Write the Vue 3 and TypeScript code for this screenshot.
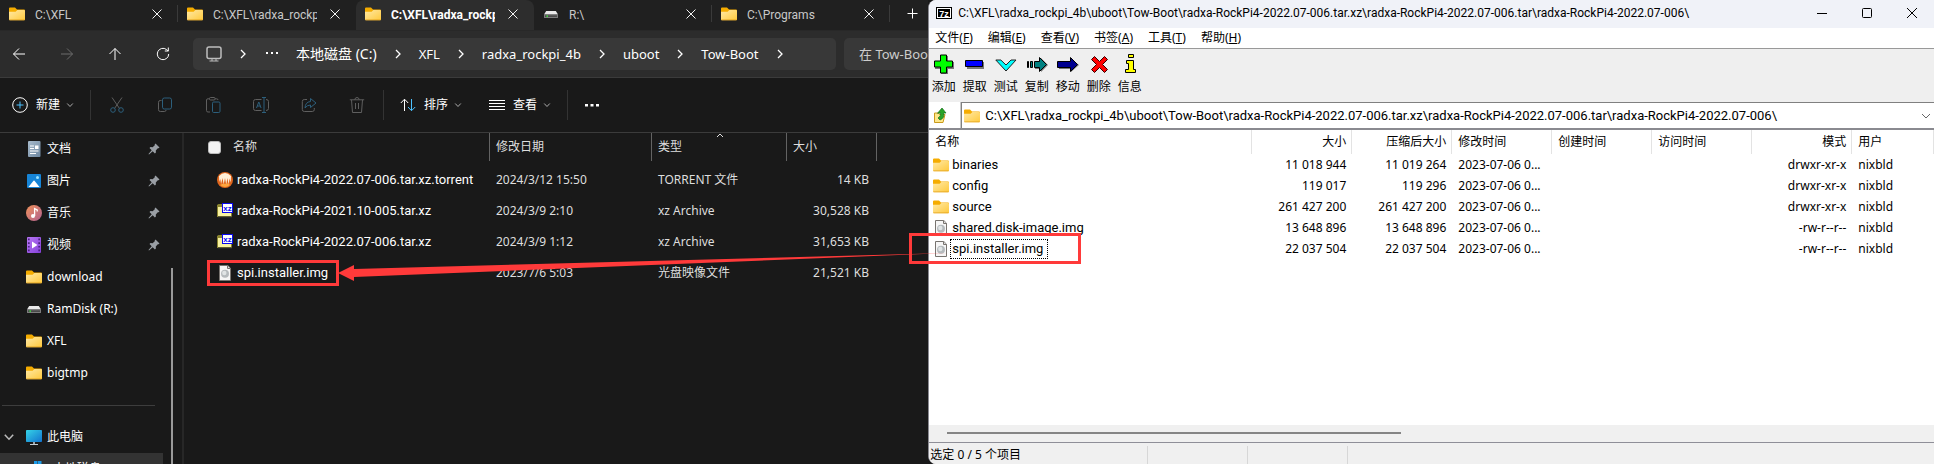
<script setup lang="ts">
interface Tab { label: string; icon: string; active?: boolean; divider?: boolean }
interface Place { label: string; icon: string; pinned?: boolean }
interface FileRow { name: string; icon: string; date: string; type: string; size: string }
interface ArchiveRow { name: string; icon: string; size: string; packed: string; mode: string; focused?: boolean }

const tabs: Tab[] = [
  { label: 'C:\\XFL', icon: 'folder', divider: true },
  { label: 'C:\\XFL\\radxa_rockp', icon: 'folder' },
  { label: 'C:\\XFL\\radxa_rockp', icon: 'folder', active: true },
  { label: 'R:\\', icon: 'drive', divider: true },
  { label: 'C:\\Programs', icon: 'folder', divider: true },
]
const navButtons = [
  { icon: 'back', label: '后退' },
  { icon: 'forward', label: '前进', disabled: true },
  { icon: 'up', label: '向上' },
  { icon: 'refresh', label: '刷新' },
]
const crumbs: string[] = ['本地磁盘 (C:)', 'XFL', 'radxa_rockpi_4b', 'uboot', 'Tow-Boot']
const editButtons = [
  { icon: 'cut', label: '剪切' },
  { icon: 'copy', label: '复制' },
  { icon: 'paste', label: '粘贴' },
  { icon: 'rename', label: '重命名' },
  { icon: 'share', label: '共享' },
  { icon: 'trash', label: '删除' },
]
const places: Place[] = [
  { label: '文档', icon: 'docs', pinned: true },
  { label: '图片', icon: 'pics', pinned: true },
  { label: '音乐', icon: 'music', pinned: true },
  { label: '视频', icon: 'video', pinned: true },
  { label: 'download', icon: 'folder' },
  { label: 'RamDisk (R:)', icon: 'drive' },
  { label: 'XFL', icon: 'folder' },
  { label: 'bigtmp', icon: 'folder' },
]
const files: FileRow[] = [
  { name: 'radxa-RockPi4-2022.07-006.tar.xz.torrent', icon: 'torrent', date: '2024/3/12 15:50', type: 'TORRENT 文件', size: '14 KB' },
  { name: 'radxa-RockPi4-2021.10-005.tar.xz', icon: 'xz', date: '2024/3/9 2:10', type: 'xz Archive', size: '30,528 KB' },
  { name: 'radxa-RockPi4-2022.07-006.tar.xz', icon: 'xz', date: '2024/3/9 1:12', type: 'xz Archive', size: '31,653 KB' },
  { name: 'spi.installer.img', icon: 'image-file', date: '2023/7/6 5:03', type: '光盘映像文件', size: '21,521 KB' },
]
const archivePath = 'C:\\XFL\\radxa_rockpi_4b\\uboot\\Tow-Boot\\radxa-RockPi4-2022.07-006.tar.xz\\radxa-RockPi4-2022.07-006.tar\\radxa-RockPi4-2022.07-006\\'
const menus: [string, string][] = [['文件', 'F'], ['编辑', 'E'], ['查看', 'V'], ['书签', 'A'], ['工具', 'T'], ['帮助', 'H']]
const tools = [
  { icon: 'z-add', label: '添加' },
  { icon: 'z-extract', label: '提取' },
  { icon: 'z-test', label: '测试' },
  { icon: 'z-copy', label: '复制' },
  { icon: 'z-move', label: '移动' },
  { icon: 'z-delete', label: '删除' },
  { icon: 'z-info', label: '信息' },
]
const entries: ArchiveRow[] = [
  { name: 'binaries', icon: 'folder', size: '11 018 944', packed: '11 019 264', mode: 'drwxr-xr-x' },
  { name: 'config', icon: 'folder', size: '119 017', packed: '119 296', mode: 'drwxr-xr-x' },
  { name: 'source', icon: 'folder', size: '261 427 200', packed: '261 427 200', mode: 'drwxr-xr-x' },
  { name: 'shared.disk-image.img', icon: 'image-file', size: '13 648 896', packed: '13 648 896', mode: '-rw-r--r--' },
  { name: 'spi.installer.img', icon: 'image-file', size: '22 037 504', packed: '22 037 504', mode: '-rw-r--r--', focused: true },
]
</script>

<template>
  <svg class="defs" aria-hidden="true">
    <defs>
      <linearGradient id="g-folder" x1="0" y1="0" x2="1" y2="1"><stop offset="0" stop-color="#ffe9a6" /><stop offset="1" stop-color="#ffc93c" /></linearGradient>
      <linearGradient id="g-docs" x1="0" y1="0" x2="1" y2="1"><stop offset="0" stop-color="#a9bccd" /><stop offset="1" stop-color="#6d87a0" /></linearGradient>
      <linearGradient id="g-music" x1="0" y1="0" x2="1" y2="1"><stop offset="0" stop-color="#f0925a" /><stop offset="1" stop-color="#b0608f" /></linearGradient>
      <linearGradient id="g-video" x1="0" y1="0" x2="1" y2="1"><stop offset="0" stop-color="#b877f5" /><stop offset="1" stop-color="#8440d8" /></linearGradient>
      <linearGradient id="g-pc" x1="0" y1="0" x2="1" y2="1"><stop offset="0" stop-color="#35d3e6" /><stop offset="1" stop-color="#1273cf" /></linearGradient>
    </defs>
    <symbol id="folder" viewBox="0 0 16 16"><path d="M0 2.6q0-1 1-1h5l2 2h7q1 0 1 1V7H0z" fill="#f5ac00" /><path d="M0 5.8h6.6L8.4 4H15q1 0 1 1v8.4q0 .8-.8.8H.8q-.8 0-.8-.8z" fill="url(#g-folder)" /><path d="M.2 13.4h15.6q-.2.9-1 .9H1.2q-.8 0-1-.9z" fill="#e2a11f" /></symbol>
    <symbol id="drive" viewBox="0 0 16 16"><path d="M3.2 5h9.600L15 8.500H1z" fill="#e9e9e9" /><rect x="1" y="8.500" width="14" height="3.500" rx=".6" fill="#7d7d7d" /><rect x="2" y="9.300" width="12" height="1.700" fill="#4a4a4a" /><rect x="3.500" y="9.400" width="1.500" height="1.500" fill="#3de03d" /></symbol>
    <symbol id="docs" viewBox="0 0 16 16"><rect x="2" width="12.500" height="16" rx="1" fill="url(#g-docs)" /><path d="M4 5h4M4 7.500h4M4 10h8.500M4 12.500h6" stroke="#fff" /><rect x="9" y="4.500" width="3.500" height="3.500" fill="#fff" /></symbol>
    <symbol id="pics" viewBox="0 0 16 16"><rect x="1" y="1" width="14" height="14" rx="1" fill="#1684d6" /><path d="M2.500 14l5-6.300q.5-.5 1 0l5 6.300z" fill="#fff" /><circle cx="11.500" cy="4.500" r="1.500" fill="#9be3ff" /></symbol>
    <symbol id="music" viewBox="0 0 16 16"><circle cx="8" cy="8" r="8" fill="url(#g-music)" /><path d="M8.600 11V3.600l2.600 1.200v1.800" fill="none" stroke="#fff" stroke-width="1.300" /><circle cx="7" cy="11" r="2" fill="#fff" /></symbol>
    <symbol id="video" viewBox="0 0 16 16"><rect x="1" width="14" height="16" rx="1" fill="url(#g-video)" /><path d="M6 4.500l5.500 3.500L6 11.500z" fill="#fff" /><path d="M2.800 1.500v13M13.200 1.500v13" stroke="#4c2380" stroke-width="1.700" stroke-dasharray="1.700 2" /></symbol>
    <symbol id="pc" viewBox="0 0 16 16"><rect y="1" width="16" height="12" rx=".8" fill="url(#g-pc)" /><path d="M7 13h2v2H7z" fill="#9aa5ad" /><path d="M4 15h8v1H4z" fill="#c3ccd2" /></symbol>
    <symbol id="system-drive" viewBox="0 0 16 16"><path d="M2 0h3.500v3.500H2zM6 0h3.500v3.500H6z" fill="#1c9be8" /><path d="M1 8h14v4H1z" fill="#999" /></symbol>
    <symbol id="pin" viewBox="0 0 12 12"><path d="M7.500.5l4 4-1 .8-.7-.1-2 2.200.1 2.100-1 1L4.700 8.300 1 11.500l-.5-.5 3.200-3.700-2.200-2.200 1-1 2.100.1 2.200-2-.1-.7z" fill="#9a9fa5" /></symbol>
    <symbol id="torrent" viewBox="0 0 16 16"><circle cx="8" cy="8" r="8" fill="#e0661d" /><path d="M2 4q6-6 12 0l-.3 6.500-1.200-4-.8 6-1.400-6.500-1 7L8 6l-1.300 6.500L5.500 6l-1.400 6-.8-5-1 3z" fill="#fff0d8" /><path d="M3 13q5 4 10 0l-2-1.500-6 .5z" fill="#ffa63d" /></symbol>
    <symbol id="xz" viewBox="0 0 16 16"><path d="M0 2l1.500-1H5v2h10v11H0z" fill="#8a8430" /><path d="M1 4h13v9H1z" fill="#f8f2a0" /><path d="M1 14h14" stroke="#333" /><rect x="5.500" y=".5" width="10" height="9" fill="#fff" stroke="#0808f0" /><text x="10.500" y="8" text-anchor="middle" class="xz-text">xz</text></symbol>
    <symbol id="image-file" viewBox="0 0 16 16"><path d="M2.500.5h8.300L13.500 3.200v12.300h-11z" fill="#f6f6f6" stroke="#77736f" /><path d="M10.500.8v2.700h2.700" fill="#ddd" stroke="#77736f" /><circle cx="8" cy="8.800" r="4" fill="#b5babd" /><circle cx="7.300" cy="8" r="2.200" fill="#e0e4e5" /></symbol>
    <symbol id="close" viewBox="0 0 16 16"><path d="M3.500 3.500l9 9M12.500 3.500l-9 9" /></symbol>
    <symbol id="plus" viewBox="0 0 16 16"><path d="M7.500 2.500v10M2.500 7.500h10" /></symbol>
    <symbol id="back" viewBox="0 0 16 16"><path d="M14 8H2.500M8 2.500L2.500 8 8 13.500" /></symbol>
    <symbol id="forward" viewBox="0 0 16 16"><path d="M2 8h11.500M8 2.500L13.500 8 8 13.500" /></symbol>
    <symbol id="up" viewBox="0 0 16 16"><path d="M8 14V2.500M2.500 8L8 2.500 13.500 8" /></symbol>
    <symbol id="refresh" viewBox="0 0 16 16"><path d="M13.700 8A5.700 5.700 0 1 1 11.500 3.500L13.200 5M13.300 1.500V5H9.800" /></symbol>
    <symbol id="monitor" viewBox="0 0 16 16"><rect x="1" y="1" width="14" height="11.500" rx="2" stroke-width="1.500" /><path d="M6 12.500V15M10 12.500V15M3.500 15h9" /></symbol>
    <symbol id="chev-right" viewBox="0 0 8 12"><path d="M2 2l4 4-4 4" stroke-width="1.300" /></symbol>
    <symbol id="chev-down" viewBox="0 0 8 8"><path d="M1.200 2.500L4 5.500l2.800-3" /></symbol>
    <symbol id="dots" viewBox="0 0 16 16"><path d="M1 7h3v2.500H1zM6.500 7h3v2.500h-3zM12 7h3v2.500h-3z" fill="currentColor" stroke="none" /></symbol>
    <symbol id="small-dots" viewBox="0 0 12 12"><path d="M0 4h2v2H0zM5 4h2v2H5zM10 4h2v2h-2z" fill="currentColor" stroke="none" /></symbol>
    <symbol id="new" viewBox="0 0 16 16"><circle cx="8" cy="8" r="7.300" /><path d="M8 4.500v7M4.500 8h7" stroke="#4cc2ff" /></symbol>
    <symbol id="cut" viewBox="0 0 16 16"><path d="M3 .5l7.500 11M13 .5l-7.500 11" /><g stroke="#2c5f7c"><circle cx="4" cy="13" r="2.300" /><circle cx="12" cy="13" r="2.300" /></g></symbol>
    <symbol id="copy" viewBox="0 0 16 16"><path d="M4.500 3.500H3.300Q1.500 3.500 1.500 5.300v7.400q0 1.800 1.800 1.800h4q1.800 0 1.800-1.500" /><rect x="5.500" y="1" width="9" height="11" rx="1.800" stroke="#2c5f7c" /></symbol>
    <symbol id="paste" viewBox="0 0 16 16"><path d="M5 15H3q-1.500 0-1.500-1.500V3Q1.500 1.800 3 1.800h1.500M10 1.800h1.500Q13 1.800 13 3" /><rect x="4.500" y=".5" width="5.500" height="2.500" rx="1" /><rect x="7.500" y="5" width="7.500" height="10.500" rx="1.200" stroke="#2c5f7c" /></symbol>
    <symbol id="rename" viewBox="0 0 18 16"><path d="M9.500 2.500h-6Q1.500 2.500 1.500 4.500v7q0 2 2 2h6M14 2.500q2.500 0 2.500 2v7q0 2-2.500 2" /><path d="M4.500 11l2.300-6 2.300 6M5.300 9h3M12 .8v14.400M10 .5h4M10 15.500h4" stroke="#2c5f7c" /></symbol>
    <symbol id="share" viewBox="0 0 16 16"><path d="M6 2.500H3.300q-2 0-2 2v8q0 2 2 2h8q2 0 2-2V11" /><path d="M9.500 1.500L15 6l-5.500 4.500V8Q6 8 4 11q.3-6 5.500-6.500z" stroke="#2c5f7c" /></symbol>
    <symbol id="trash" viewBox="0 0 16 16"><path d="M.8 2.800h14.400M2.500 2.800l1 12.700h9l1-12.700M5.800 2.800Q6 .5 8 .5t2.200 2.300M6.500 6v6M9.500 6v6" /></symbol>
    <symbol id="sort" viewBox="0 0 16 16"><path d="M4.500 14V2.500M.8 6l3.700-3.800L8.200 6" /><path d="M11.500 2v11.500M8 10l3.500 3.700L15.200 10" stroke="#4cc2ff" /></symbol>
    <symbol id="lines" viewBox="0 0 16 16"><path d="M0 3.500h16M0 6.500h16M0 9.500h16M0 12.500h16" /></symbol>
    <symbol id="zip-logo" viewBox="0 0 16 12"><rect width="16" height="12" fill="#000" /><rect x="1.500" y="1.500" width="13" height="9" fill="#000" stroke="#fff" /><text x="8" y="9.500" text-anchor="middle" class="zip-text">7z</text></symbol>
    <symbol id="z-add" viewBox="0 0 22 20"><path d="M8 2h7v6h6v7h-6v6H8v-6H2V8h6z" fill="#777" /><path d="M7.500 1h6v6h6v6h-6v6h-6v-6h-6V7h6z" fill="#0f0" stroke="#000" /></symbol>
    <symbol id="z-extract" viewBox="0 0 22 20"><path d="M3 8h17v7H3z" fill="#777" /><path d="M1.500 6.500h17v6h-17z" fill="#00f" stroke="#000" /></symbol>
    <symbol id="z-test" viewBox="0 0 22 20"><path d="M.8 6h5l5.200 5L16 6h5L11 17z" fill="#0ff" stroke="#222" /></symbol>
    <symbol id="z-copy" viewBox="0 0 22 20"><path d="M9 7h6V4l7 7-7 7v-3H9z" fill="#777" /><path d="M1.500 7.500h1v6h-1zM4.500 7.500h2v6h-2zM8.500 7.500h5v-4l7 7-7 7v-4h-5z" fill="#008080" stroke="#000" /></symbol>
    <symbol id="z-move" viewBox="0 0 22 20"><path d="M2 8h12V5l8 6-8 7v-3H2z" fill="#777" /><path d="M.5 7.500h13v-4l7 7-7 7v-4H.5z" fill="#000090" stroke="#000" /></symbol>
    <symbol id="z-delete" viewBox="0 0 22 20"><path d="M6.500 2.500l5 5 5-5 3 3-5 5 5 5-3 3-5-5-5 5-3-3 5-5-5-5z" fill="#f00" stroke="#300" /></symbol>
    <symbol id="z-info" viewBox="0 0 22 20"><path d="M9.500.5h5v3h-5zM7.500 6.500h7v9h2v3h-10v-3h3v-6h-2z" fill="#ff0" stroke="#000" /></symbol>
    <symbol id="folder-up" viewBox="0 0 16 16"><path d="M1.500 6h4l1 1.500h5.500L10 15.500H1.500z" fill="#ffe78a" stroke="#c99a1c" /><path d="M7 13q5-2 3.500-7H13L9 1 4.500 6.300l3-.3q.8 3-2.500 5z" fill="#28a428" stroke="#14701a" stroke-width=".7" /></symbol>
  </svg>

  <main class="desktop">
    <section class="explorer" aria-label="文件资源管理器">
      <div class="tabs">
        <div v-for="(tab, i) in tabs" :key="i" class="tab" :class="{ active: tab.active, divider: tab.divider }">
          <svg class="i16"><use :href="'#' + tab.icon" /></svg>
          <span class="tab-label">{{ tab.label }}</span>
          <button class="plain" aria-label="关闭选项卡"><svg class="i16 line"><use href="#close" /></svg></button>
        </div>
        <button class="plain new-tab" aria-label="新建选项卡"><svg class="i16 line"><use href="#plus" /></svg></button>
      </div>

      <nav class="nav">
        <button v-for="b in navButtons" :key="b.icon" class="plain nav-btn" :aria-label="b.label" :disabled="b.disabled">
          <svg class="i16 line"><use :href="'#' + b.icon" /></svg>
        </button>
        <div class="address">
          <svg class="i16 line pc-outline"><use href="#monitor" /></svg>
          <svg class="chev line"><use href="#chev-right" /></svg>
          <svg class="i12 line overflow-dots"><use href="#small-dots" /></svg>
          <template v-for="c in crumbs" :key="c">
            <a href="#" class="crumb">{{ c }}</a>
            <svg class="chev line"><use href="#chev-right" /></svg>
          </template>
        </div>
        <input class="search" type="search" aria-label="搜索" placeholder="在 Tow-Boot 中搜索" />
      </nav>

      <div class="commands">
        <button class="plain cmd"><svg class="i16 line"><use href="#new" /></svg>新建<svg class="i8 line"><use href="#chev-down" /></svg></button>
        <div class="edit-group">
          <button v-for="b in editButtons" :key="b.icon" class="plain" :aria-label="b.label" disabled>
            <svg class="i18 line"><use :href="'#' + b.icon" /></svg>
          </button>
        </div>
        <div class="view-group">
          <button class="plain cmd"><svg class="i16 line"><use href="#sort" /></svg>排序<svg class="i8 line"><use href="#chev-down" /></svg></button>
          <button class="plain cmd"><svg class="i16 line"><use href="#lines" /></svg>查看<svg class="i8 line"><use href="#chev-down" /></svg></button>
        </div>
        <button class="plain more" aria-label="更多"><svg class="i16 line"><use href="#dots" /></svg></button>
      </div>

      <div class="body">
        <aside class="side">
          <div class="places">
            <a v-for="p in places" :key="p.label" href="#" class="place">
              <svg class="i16"><use :href="'#' + p.icon" /></svg>
              <span>{{ p.label }}</span>
              <svg v-if="p.pinned" class="i12 pin"><use href="#pin" /></svg>
            </a>
            <hr />
            <a href="#" class="place root"><svg class="i12 line twist"><use href="#chev-down" /></svg><svg class="i16"><use href="#pc" /></svg><span>此电脑</span></a>
            <a href="#" class="place selected"><svg class="i16"><use href="#system-drive" /></svg><span>本地磁盘 (C:)</span></a>
          </div>
          <div class="track"><div class="thumb"></div></div>
        </aside>
        <div class="listing">
          <table class="files">
            <colgroup><col class="c-name" /><col class="c-date" /><col class="c-type" /><col class="c-size" /></colgroup>
            <thead>
              <tr>
                <th><label class="head-name"><input type="checkbox" class="check" aria-label="全选" />名称</label></th>
                <th>修改日期</th>
                <th class="sorted">类型<svg class="caret line" viewBox="0 0 8 5"><path d="M1 4l3-3 3 3" /></svg></th>
                <th>大小</th>
              </tr>
            </thead>
            <tbody>
              <tr v-for="f in files" :key="f.name">
                <td><span class="file"><svg class="i16"><use :href="'#' + f.icon" /></svg>{{ f.name }}</span></td>
                <td>{{ f.date }}</td>
                <td>{{ f.type }}</td>
                <td class="num">{{ f.size }}</td>
              </tr>
            </tbody>
          </table>
        </div>
      </div>
    </section>

    <section class="zip" aria-label="7-Zip">
      <header class="title">
        <svg class="logo"><use href="#zip-logo" /></svg>
        <h1>{{ archivePath }}</h1>
        <button class="plain win" aria-label="最小化"><svg class="i12 line" viewBox="0 0 12 12"><path d="M1 6.500h10" /></svg></button>
        <button class="plain win" aria-label="最大化"><svg class="i12 line" viewBox="0 0 12 12"><rect x="1.500" y="1.500" width="9" height="9" rx="1" /></svg></button>
        <button class="plain win" aria-label="关闭"><svg class="i12 line" viewBox="0 0 12 12"><path d="M1 1l10 10M11 1L1 11" /></svg></button>
      </header>
      <div class="menu">
        <button v-for="m in menus" :key="m[1]" class="plain">{{ m[0] }}(<u>{{ m[1] }}</u>)</button>
      </div>
      <div class="tools">
        <button v-for="t in tools" :key="t.icon" class="plain tool"><svg><use :href="'#' + t.icon" /></svg>{{ t.label }}</button>
      </div>
      <div class="path">
        <button class="plain up" aria-label="向上一级"><svg class="i16"><use href="#folder-up" /></svg></button>
        <div class="combo">
          <svg class="i16"><use href="#folder" /></svg>
          <input type="text" aria-label="路径" :value="archivePath" />
          <button class="plain drop" aria-label="展开"><svg class="i12 line" viewBox="0 0 12 12"><path d="M2 4l4 4 4-4" /></svg></button>
        </div>
      </div>
      <div class="entries">
        <table>
          <colgroup><col class="z-name" /><col v-for="n in 6" :key="n" class="z-col" /><col class="z-last" /></colgroup>
          <thead>
            <tr>
              <th>名称</th><th class="num">大小</th><th class="num">压缩后大小</th><th>修改时间</th><th>创建时间</th><th>访问时间</th><th class="num">模式</th><th>用户</th>
            </tr>
          </thead>
          <tbody>
            <tr v-for="e in entries" :key="e.name">
              <td><span class="entry"><svg class="i16"><use :href="'#' + e.icon" /></svg><span class="entry-name" :class="{ focused: e.focused }">{{ e.name }}</span></span></td>
              <td class="num">{{ e.size }}</td>
              <td class="num">{{ e.packed }}</td>
              <td>2023-07-06 0...</td>
              <td></td>
              <td></td>
              <td class="num">{{ e.mode }}</td>
              <td>nixbld</td>
            </tr>
          </tbody>
        </table>
      </div>
      <div class="hscroll"><div class="hthumb"></div></div>
      <footer class="status"><span class="count">选定 0 / 5 个项目</span><span></span><span></span><span></span></footer>
    </section>

    <svg class="marks" aria-hidden="true">
      <rect x="208.500" y="261.500" width="129" height="23" />
      <rect x="910.500" y="234.500" width="169" height="28" />
      <path d="M338 273l16-8v4L948 253 354 277v4z" />
    </svg>
  </main>
</template>

<style>
body { margin: 0; background: #191919; }
</style>

<style scoped>
.defs { position: absolute; width: 0; height: 0; }
.xz-text { font: bold 8px "Liberation Sans", sans-serif; fill: #0808f0; }
.zip-text { font: bold 9px "Liberation Sans", sans-serif; fill: #fff; }
.desktop {
  position: relative;
  display: grid;
  grid-template-columns: 12fr 13fr;
  height: 100vh;
  overflow: hidden;
  font: 12px/16px "Noto Sans", "Noto Sans CJK SC", sans-serif;
}
.desktop * { box-sizing: border-box; }
svg { display: block; flex: none; }
.i8 { width: 8px; height: 8px; }
.i12 { width: 12px; height: 12px; }
.i16 { width: 16px; height: 16px; }
.i18 { width: 18px; height: 16px; }
.line { fill: none; stroke: currentColor; }
.plain { margin: 0; padding: 0; border: 0; background: none; color: inherit; font: inherit; white-space: nowrap; }
a { color: inherit; text-decoration: none; }

.explorer { display: flex; flex-direction: column; min-width: 0; overflow: hidden; background: #191919; color: #fff; }
.tabs { display: flex; flex: none; height: 31px; background: #202020; border-bottom: 1px solid #282828; font-family: Roboto, "Noto Sans CJK SC", sans-serif; }
.tab { display: flex; flex: none; align-items: center; width: 178px; padding: 0 0 3px 9px; color: #c8c8c8; }
.tab-label { flex: none; width: 104px; margin: 2px 10px 0 10px; overflow: hidden; white-space: nowrap; }
.tab .plain { color: #f2f2f2; }
.tab.divider { border-right: 1px solid #3a3a3a; border-image: linear-gradient(#202020 6px, #3a3a3a 6px, #3a3a3a 22px, #202020 22px) 1; }
.tab.active { background: #2d2d2d; color: #fff; font-weight: bold; border-radius: 8px 8px 0 0; }
.new-tab { padding: 0 0 2px 15px; }

.nav { display: flex; flex: none; align-items: center; height: 47px; padding: 0 0 0 11px; background: #2c2c2c; border-bottom: 1px solid #3b3b3b; font-size: 13px; }
.nav-btn { flex: none; width: 16px; margin-right: 32px; }
.nav-btn:last-of-type { margin-right: 22px; }
.nav-btn:disabled { color: #6c6c6c; }
.address { display: flex; flex: none; align-items: center; width: 643px; height: 32px; padding: 0 13px; background: #383838; border-radius: 5px; gap: 17px; }
.pc-outline { color: #bdbdbd; }
.overflow-dots { margin: 0 1px 0 2px; }
.chev { width: 8px; height: 12px; }
.crumb { white-space: nowrap; }
.crumb:first-of-type { font-size: 14px; }
.search { flex: none; width: 200px; height: 32px; margin-left: 8px; padding: 0 15px; border: 0; border-radius: 5px; background: #383838; font: inherit; }
.search::placeholder { color: #cdcdcd; opacity: 1; }

.commands { display: flex; flex: none; align-items: center; height: 55px; border-bottom: 1px solid #3b3b3b; }
.cmd { display: flex; align-items: center; }
.cmd .i16 { margin-right: 8px; }
.cmd .i8 { margin-left: 6px; color: #aaa; }
.commands > .cmd { padding: 0 16px 0 12px; }
.edit-group { display: flex; gap: 30px; padding: 7px 17px; border: solid #333; border-width: 0 1px; color: #5f5f5f; }
.view-group { display: flex; gap: 27px; padding: 7px 16px; border-right: 1px solid #333; }
.more { padding: 0 16px; }

.body { display: flex; flex: 1; min-height: 0; }
.side { display: flex; flex: none; width: 184px; border-right: 2px solid #272727; overflow: hidden; }
.places { flex: none; width: 163px; }
.place { display: flex; align-items: center; gap: 5px; height: 32px; padding: 0 3px 0 26px; white-space: nowrap; }
.pin { margin-left: auto; }
hr { height: 1px; margin: 16px 8px 15px 2px; border: 0; background: #3d3d3d; }
.root { padding-left: 3px; }
.twist { margin-right: 6px; color: #bbb; }
.selected { padding-left: 32px; background: #333; }
.track { display: flex; align-items: flex-end; padding-left: 8px; }
.thumb { width: 2px; height: calc(100% - 135px); background: #9a9a9a; }

.listing { flex: 1; min-width: 0; overflow: hidden; color: #dedede; }
table { border-collapse: separate; border-spacing: 0; table-layout: fixed; }
th { font-weight: normal; text-align: left; white-space: nowrap; }
td { white-space: nowrap; padding: 0; }
.files { width: 693px; }
.c-name { width: 306px; }
.c-date { width: 162px; }
.c-type { width: 135px; }
.c-size { width: 90px; }
.files th { position: relative; height: 28px; padding: 0 6px; border-right: 1px solid #636363; }
.files tbody::before { content: ""; display: block; height: 3px; }
.files td { height: 31px; padding: 0 8px 0 6px; }
.files td:first-child { padding-left: 33px; color: #fff; }
.num, .entries .num { text-align: right; }
.head-name { display: flex; align-items: center; padding-left: 18px; gap: 12px; }
.check { appearance: none; width: 13px; height: 13px; margin: 0; border: 1px solid #bbb; border-radius: 3px; background: #f3f3f3; }
.caret { position: absolute; top: 0; left: 64px; width: 8px; height: 5px; }
.file { display: flex; align-items: center; gap: 4px; }
.file, .entry-name { font-family: Roboto, "Noto Sans", sans-serif; font-size: 13px; }

.zip { display: flex; flex-direction: column; min-width: 0; overflow: hidden; background: #fff; color: #000; border-left: 1px solid #8a8a92; border-radius: 8px 0 0 8px; }
.title { display: flex; flex: none; align-items: center; height: 28px; padding: 0 0 3px 7px; background: #f0f2f8; }
.logo { width: 16px; height: 12px; }
.title h1 { flex: 1; min-width: 0; margin: 0 0 0 6px; overflow: hidden; font: 12px/16px Roboto, "Noto Sans", sans-serif; white-space: nowrap; }
.win { flex: none; display: flex; justify-content: center; width: 45px; }
.menu { display: flex; flex: none; align-items: center; height: 20px; gap: 15px; padding: 0 6px; }
.tools { display: flex; flex: none; height: 54px; background: #efefef; border-top: 1px solid #999; padding: 5px 0 0; }
.tool { display: flex; flex-direction: column; align-items: center; width: 31px; gap: 5px; margin-left: -1px; margin-right: 1px; }
.tool svg { width: 22px; height: 20px; overflow: visible; }
.path { display: flex; flex: none; height: 28px; border-bottom: 2px solid #8a8a90; }
.up { width: 32px; padding-left: 4px; border-right: 1px solid #c8c8c8; }
.combo { display: flex; flex: 1; align-items: center; border: 1px solid #808080; border-width: 1px 0 0 1px; padding: 0 2px 0 2px; gap: 5px; }
.combo input { flex: 1; min-width: 0; padding: 0; border: 0; outline: 0; background: none; font: 13px/16px Roboto, "Noto Sans", sans-serif; color: #000; }
.drop { color: #666; }
.entries { flex: 1; min-height: 0; overflow: hidden; }
.entries table { width: 100%; }
.z-name { width: 323px; }
.z-col { width: 100px; }
.entries th { height: 24px; padding: 0 6px; background: linear-gradient(#e3e3e3, #e3e3e3) right / 1px 100% no-repeat; }
.entries td { height: 21px; padding: 0 6px; }
.entries td:first-child { padding-left: 4px; }
.entry { display: flex; align-items: center; gap: 1px; }
.entry-name { padding: 0 4px 0 1px; border: 1px solid transparent; line-height: 18px; }
.entry-name.focused { border: 1px dotted #000; }
.hscroll { flex: none; height: 17px; padding: 7px 0 0 18px; background: #f0f0f0; }
.hthumb { width: 46%; height: 2px; background: #858585; }
.status { display: flex; flex: none; height: 22px; background: #f0f0f0; border-top: 1px solid #8f8f98; padding: 3px 0 0; }
.status span { width: 100px; border-right: 1px solid #d7d7d7; }
.status .count { width: 219px; padding: 1px 0 0 1px; }
.status span:last-child { flex: 1; border: 0; }

.marks { position: absolute; top: 0; left: 0; width: 100%; height: 100%; pointer-events: none; }
.marks rect { fill: none; stroke: #ff3a3a; stroke-width: 3; }
.marks path { fill: #ff3a3a; }
</style>
